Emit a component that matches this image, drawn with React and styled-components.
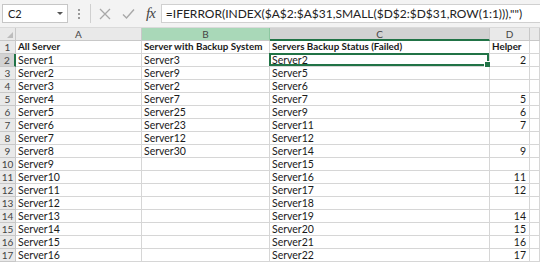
import React from 'react'
import styled, { createGlobalStyle } from 'styled-components'

const GlobalStyle = createGlobalStyle`
  html, body {
    margin: 0;
    padding: 0;
    background: #ffffff;
  }
  body {
    font-family: Lato, "Liberation Sans", sans-serif;
    overflow: hidden;
  }
`

const Window = styled.div`
  width: 540px;
  height: 263px;
  overflow: hidden;
  background: #ffffff;
  display: flex;
  flex-direction: column;
`

const FormulaBar = styled.div`
  height: 28px;
  background: #f3f3f3;
  display: flex;
  align-items: center;
  padding: 0 0 0 2px;
  box-sizing: border-box;
  border-bottom: 1px solid #dadada;
`

const NameBox = styled.div`
  width: 66px;
  height: 19px;
  background: #fff;
  border: 1px solid #c6c6c6;
  box-sizing: border-box;
  display: flex;
  align-items: center;
  justify-content: space-between;
  padding: 0 4px 0 5px;
  font-size: 11px;
  color: #222;
`

const Caret = styled.span`
  width: 0;
  height: 0;
  border-left: 3px solid transparent;
  border-right: 3px solid transparent;
  border-top: 3px solid #555;
`

const Grip = styled.div`
  width: 22px;
  display: flex;
  flex-direction: column;
  align-items: center;
  gap: 2px;

  & span {
    width: 2px;
    height: 2px;
    background: #9a9a9a;
  }
`

const IconGroup = styled.div`
  height: 19px;
  display: flex;
  align-items: center;
  gap: 11px;
  padding: 0 6px 0 8px;
  border-left: 1px solid #d0d0d0;
  box-sizing: border-box;
`

const Fx = styled.span`
  font-family: "Liberation Serif", serif;
  font-style: italic;
  font-size: 15px;
  color: #444;
  letter-spacing: -1px;
`

const FormulaInput = styled.div`
  flex: 1;
  height: 19px;
  background: #fff;
  border: 1px solid #d0d0d0;
  border-right: none;
  box-sizing: border-box;
  display: flex;
  align-items: center;
  padding-left: 4px;
  font-size: 12px;
  color: #222;
  white-space: nowrap;
  overflow: hidden;
`

const Sheet = styled.div`
  display: grid;
  grid-template-columns: 16px 126px 128px 220px 40px 1fr;
  grid-auto-rows: 13px;
`

const ColHead = styled.div`
  background: ${p => (p.$active ? '#a9d8b8' : p.$current ? '#d2d2d2' : '#e9e9e9')};
  border-right: 1px solid ${p => (p.$active ? '#8cc7a0' : '#c8c8c8')};
  border-bottom: ${p => (p.$current ? '2px solid #217346' : '1px solid #c8c8c8')};
  box-sizing: border-box;
  display: flex;
  align-items: center;
  justify-content: center;
  font-size: 10px;
  color: #444;
  line-height: 1;
`

const Corner = styled(ColHead)`
  position: relative;

  &::after {
    content: '';
    position: absolute;
    right: 2px;
    bottom: 2px;
    border-left: 6px solid transparent;
    border-bottom: 6px solid #bcbcbc;
  }
`

const RowHead = styled.div`
  background: ${p => (p.$current ? '#d2d2d2' : '#e9e9e9')};
  border-right: ${p => (p.$current ? '2px solid #217346' : '1px solid #c8c8c8')};
  border-bottom: 1px solid #c8c8c8;
  box-sizing: border-box;
  display: flex;
  align-items: center;
  justify-content: center;
  font-size: 10px;
  color: #444;
  line-height: 1;
`

const Cell = styled.div`
  position: relative;
  border-right: 1px solid #d6d6d6;
  border-bottom: 1px solid #d6d6d6;
  box-sizing: border-box;
  display: flex;
  align-items: center;
  justify-content: ${p => (p.$num ? 'flex-end' : 'flex-start')};
  padding: 0 3px 0 2px;
  font-size: ${p => (p.$bold ? '9.8px' : '10.5px')};
  font-weight: ${p => (p.$bold ? 700 : 400)};
  color: #1a1a1a;
  white-space: nowrap;
  overflow: hidden;
  line-height: 1;
`

const Selection = styled.div`
  position: absolute;
  inset: -1px 0 0 -1px;
  border: 2px solid #217346;
  pointer-events: none;

  &::after {
    content: '';
    position: absolute;
    right: -4px;
    bottom: -4px;
    width: 5px;
    height: 5px;
    background: #217346;
    border: 1px solid #fff;
  }
`

const SelectedCell = styled(Cell)`
  overflow: visible;
`

const rows = [
  ['All Server', 'Server with Backup System', 'Servers Backup Status (Failed)', 'Helper'],
  ['Server1', 'Server3', 'Server2', '2'],
  ['Server2', 'Server9', 'Server5', ''],
  ['Server3', 'Server2', 'Server6', ''],
  ['Server4', 'Server7', 'Server7', '5'],
  ['Server5', 'Server25', 'Server9', '6'],
  ['Server6', 'Server23', 'Server11', '7'],
  ['Server7', 'Server12', 'Server12', ''],
  ['Server8', 'Server30', 'Server14', '9'],
  ['Server9', '', 'Server15', ''],
  ['Server10', '', 'Server16', '11'],
  ['Server11', '', 'Server17', '12'],
  ['Server12', '', 'Server18', ''],
  ['Server13', '', 'Server19', '14'],
  ['Server14', '', 'Server20', '15'],
  ['Server15', '', 'Server21', '16'],
  ['Server16', '', 'Server22', '17'],
]

const CrossIcon = () => (
  <svg width="12" height="12" viewBox="0 0 12 12">
    <path d="M1 1 L11 11 M11 1 L1 11" stroke="#a8a8a8" strokeWidth="1.3" fill="none" />
  </svg>
)

const CheckIcon = () => (
  <svg width="13" height="12" viewBox="0 0 13 12">
    <path d="M1 6.5 L4.5 10 L12 1.5" stroke="#a8a8a8" strokeWidth="1.4" fill="none" />
  </svg>
)

const App = () => {
  return (
    <Window>
      <GlobalStyle />
      <FormulaBar>
        <NameBox>
          C2
          <Caret />
        </NameBox>
        <Grip>
          <span />
          <span />
          <span />
        </Grip>
        <IconGroup>
          <CrossIcon />
          <CheckIcon />
          <Fx>fx</Fx>
        </IconGroup>
        <FormulaInput>=IFERROR(INDEX($A$2:$A$31,SMALL($D$2:$D$31,ROW(1:1))),"")</FormulaInput>
      </FormulaBar>
      <Sheet>
        <Corner />
        <ColHead>A</ColHead>
        <ColHead $active>B</ColHead>
        <ColHead $current>C</ColHead>
        <ColHead>D</ColHead>
        <ColHead />
        {rows.map((r, i) => (
          <React.Fragment key={i}>
            <RowHead $current={i === 1}>{i + 1}</RowHead>
            <Cell $bold={i === 0}>{r[0]}</Cell>
            <Cell $bold={i === 0}>{r[1]}</Cell>
            {i === 1 ? (
              <SelectedCell>
                {r[2]}
                <Selection />
              </SelectedCell>
            ) : (
              <Cell $bold={i === 0}>{r[2]}</Cell>
            )}
            <Cell $bold={i === 0} $num={i !== 0}>{r[3]}</Cell>
            <Cell />
          </React.Fragment>
        ))}
      </Sheet>
    </Window>
  )
}

export default App
